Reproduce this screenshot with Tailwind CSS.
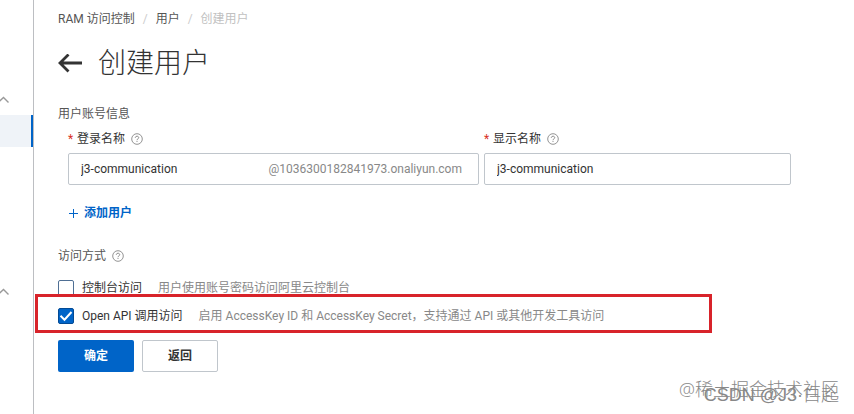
<!DOCTYPE html>
<html lang="zh-CN">

<head>
	<meta charset="UTF-8">
	<meta name="viewport" content="width=device-width, initial-scale=1.0">
	<title>创建用户 - RAM 访问控制</title>
	<script src="https://cdn.jsdelivr.net/npm/@tailwindcss/browser@4"></script>
</head>

<body class="relative flex min-h-screen overflow-x-hidden bg-white font-['Roboto','Noto_Sans_CJK_SC',sans-serif] text-xs leading-5 text-[#333]">
	<!-- Collapsed side menu -->
	<nav aria-label="菜单" class="flex w-[34px] shrink-0 flex-col border-r border-[#bcbec2] pt-24">
		<button type="button" aria-label="收起" class="flex h-[19px] w-[10px] items-start">
			<svg class="block h-2 w-[10px]" viewBox="0 0 10 8" fill="none" stroke="#999" stroke-width="1.4"><path d="M-2 6.5 3.5 1.5 8.5 6.5" /></svg>
		</button>
		<a href="#" aria-label="用户" class="block h-8 border-r-2 border-[#0064c8] bg-[#eff3f8]"></a>
		<button type="button" aria-label="收起" class="mt-[141px] flex h-[19px] w-[10px] items-start">
			<svg class="block h-2 w-[10px]" viewBox="0 0 10 8" fill="none" stroke="#999" stroke-width="1.4"><path d="M-2 6.5 3.5 1.5 8.5 6.5" /></svg>
		</button>
	</nav>

	<main class="min-w-0 flex-1 pt-[9px] pr-[63px] pl-6">
		<nav aria-label="面包屑" class="flex h-5 items-center gap-2 whitespace-nowrap text-[#555]">
			<a href="#">RAM 访问控制</a>
			<span class="text-[#ccc]">/</span>
			<a href="#">用户</a>
			<span class="text-[#ccc]">/</span>
			<span class="text-[#c1c1c1]">创建用户</span>
		</nav>

		<header class="mt-[15px] flex h-10 items-center gap-4">
			<a href="#" aria-label="返回">
				<svg class="block h-5 w-6" viewBox="0 0 24 20" fill="none" stroke="#333" stroke-width="2.8"><path d="M24 9H2M10.5 .5 2 9 10.5 17.5" /></svg>
			</a>
			<h1 class="text-[28px] leading-10 font-light">创建用户</h1>
		</header>

		<form>
			<h2 class="mt-5 text-[#555]">用户账号信息</h2>
			<div class="mt-[5px] grid grid-cols-[411fr_307fr] gap-[5px] pl-[10px]">
				<div>
					<div class="flex items-center">
						<span class="w-[9px] text-[#d93026]">*</span>
						<label for="loginName">登录名称</label>
						<svg class="ml-[6px] size-3" viewBox="0 0 12 12" fill="none" stroke="#888"><circle cx="6" cy="6" r="5.3" stroke-width=".9" /><path d="M4.3 4.8C4.3 2.7 7.7 2.7 7.7 4.7 7.7 5.9 6 5.8 6 7.2M6 8.1V9" /></svg>
					</div>
					<div class="mt-1 flex h-8 items-center rounded-xs border border-[#c0c6cc] pr-4 pl-3">
						<input type="text" id="loginName" value="j3-communication" class="min-w-0 flex-1 outline-none">
						<span class="text-[#888]">@1036300182841973.onaliyun.com</span>
					</div>
				</div>
				<div>
					<div class="flex items-center">
						<span class="w-[9px] text-[#d93026]">*</span>
						<label for="displayName">显示名称</label>
						<svg class="ml-[6px] size-3" viewBox="0 0 12 12" fill="none" stroke="#888"><circle cx="6" cy="6" r="5.3" stroke-width=".9" /><path d="M4.3 4.8C4.3 2.7 7.7 2.7 7.7 4.7 7.7 5.9 6 5.8 6 7.2M6 8.1V9" /></svg>
					</div>
					<input type="text" id="displayName" value="j3-communication" class="mt-1 block h-8 w-full rounded-xs border border-[#c0c6cc] px-3 outline-none">
				</div>
			</div>

			<button type="button" class="mt-[18px] ml-[11px] flex h-5 items-center gap-[6px] font-bold text-[#0064c8]">
				<svg class="size-[9px]" viewBox="0 0 9 9" fill="none" stroke="#0064c8" stroke-width="1"><path d="M4.5 0v9M0 4.5h9" /></svg>
				添加用户
			</button>

			<h2 class="mt-[23px] flex items-center text-[#555]">
				访问方式
				<svg class="ml-[6px] size-3" viewBox="0 0 12 12" fill="none" stroke="#888"><circle cx="6" cy="6" r="5.3" stroke-width=".9" /><path d="M4.3 4.8C4.3 2.7 7.7 2.7 7.7 4.7 7.7 5.9 6 5.8 6 7.2M6 8.1V9" /></svg>
			</h2>
			<div class="mt-3 flex h-5 items-center whitespace-nowrap">
				<input type="checkbox" id="console" class="size-4 appearance-none rounded-xs border border-[#4f6f94] bg-white">
				<label for="console" class="ml-2">控制台访问</label>
				<span class="ml-4 text-[#888]">用户使用账号密码访问阿里云控制台</span>
			</div>
			<div class="relative mt-2 flex h-5 items-center whitespace-nowrap">
				<div class="grid size-4">
					<input type="checkbox" id="openApi" checked class="col-start-1 row-start-1 size-4 appearance-none rounded-xs border border-[#034a94] bg-[#0064c8]">
					<svg class="pointer-events-none col-start-1 row-start-1 size-4" viewBox="0 0 16 16" fill="none" stroke="#fff" stroke-width="2"><path d="M2.5 7.7 6.5 11.7 13.5 4" /></svg>
				</div>
				<label for="openApi" class="ml-2">Open API 调用访问</label>
				<span class="ml-4 text-[#888]">启用 AccessKey ID 和 AccessKey Secret，支持通过 API 或其他开发工具访问</span>
				<!-- Highlight frame -->
				<div class="pointer-events-none absolute -top-3 -left-[23px] h-[39px] w-[677px] border-3 border-[#d8232a]"></div>
			</div>

			<div class="mt-[14px] flex gap-2 font-bold">
				<button type="submit" class="h-8 w-[76px] rounded-xs bg-[#0064c8] text-white">确定</button>
				<button type="button" class="h-8 w-[76px] rounded-xs border border-[#c0c6cc]">返回</button>
			</div>
		</form>
	</main>

	<!-- Watermarks -->
	<div class="pointer-events-none absolute right-[15px] bottom-[13px] font-['Open_Sans','Noto_Sans_CJK_SC',sans-serif] text-lg leading-6 font-light whitespace-nowrap text-[#888]">@稀土掘金技术社区</div>
	<div class="pointer-events-none absolute right-[15px] bottom-[7px] font-['Liberation_Sans','Noto_Sans_CJK_SC',sans-serif] text-lg leading-6 font-light whitespace-nowrap text-[#888]">CSDN @J3·白起</div>
</body>

</html>
